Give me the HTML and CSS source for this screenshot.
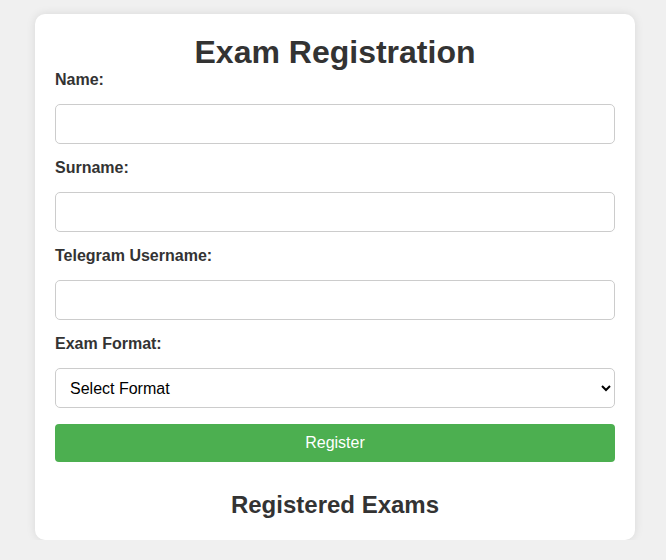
FILE: index.html
```html
<!DOCTYPE html>
<html lang="en">
<head>
<meta charset="UTF-8">
<title>Exam Registration</title>
<link rel="stylesheet" href="styles.css">
</head>
<body>
<div class="card">
  <h1 class="title">Exam Registration</h1>
  <form class="form">
    <label class="label" for="name">Name:</label>
    <input class="field" id="name" type="text">
    <label class="label" for="surname">Surname:</label>
    <input class="field" id="surname" type="text">
    <label class="label" for="tg">Telegram Username:</label>
    <input class="field" id="tg" type="text">
    <label class="label" for="format">Exam Format:</label>
    <select class="field select" id="format">
      <option>Select Format</option>
      <option>Online</option>
      <option>Offline</option>
    </select>
    <button class="btn" type="button">Register</button>
  </form>
  <h2 class="subtitle">Registered Exams</h2>
</div>
</body>
</html>
```
FILE: styles.css
```css
html, body {
  margin: 0;
  background: #f0f0f0;
  font-family: "Liberation Sans", Arial, sans-serif;
  color: #333;
}
body {
  padding: 14px 0 0 4px;
}
.card {
  width: 600px;
  box-sizing: border-box;
  margin: 0 auto;
  background: #fff;
  border-radius: 10px;
  box-shadow: 0 0 10px rgba(0, 0, 0, 0.1);
  padding: 20px 20px 20px;
}
.title {
  margin: 0;
  font-size: 32px;
  text-align: center;
  line-height: 37px;
  color: #333;
}
.form {
  display: flex;
  flex-direction: column;
}
.label {
  font-weight: bold;
  font-size: 16px;
  line-height: 18px;
  margin-bottom: 15px;
  color: #333;
}
.field {
  height: 40px;
  box-sizing: border-box;
  border: 1px solid #ccc;
  border-radius: 5px;
  padding: 10px;
  font-size: 16px;
  font-family: "Liberation Sans", Arial, sans-serif;
  margin: 0 0 15px;
  background: #fff;
  color: #000;
}
.select {
  margin-bottom: 16px;
}
.btn {
  height: 38px;
  border: none;
  border-radius: 4px;
  background: #4caf50;
  color: #fff;
  font-size: 16px;
  font-family: "Liberation Sans", Arial, sans-serif;
}
.subtitle {
  margin: 29px 0 1px;
  font-size: 24px;
  line-height: 28px;
  text-align: center;
  color: #333;
}
```
